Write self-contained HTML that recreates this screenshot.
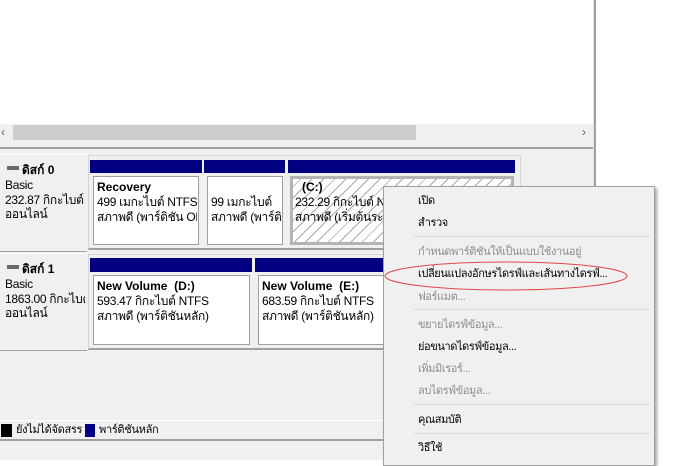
<!DOCTYPE html>
<html><head><meta charset="utf-8"><style>
*{margin:0;padding:0;box-sizing:border-box}
body{width:700px;height:460px;position:relative;overflow:hidden;background:#fff;font-family:"Liberation Sans","DejaVu Sans",sans-serif;font-size:12px;color:#000}
.a{position:absolute}
.t{position:absolute;white-space:nowrap;line-height:14px;letter-spacing:-0.3px}
.b{font-weight:bold;letter-spacing:0}
.bar{position:absolute;background:#000080}
.body{position:absolute;background:#fff;border:1px solid #a0a0a0;overflow:hidden}
.mi{position:absolute;left:34px;white-space:nowrap;line-height:14px;font-size:11px;letter-spacing:-0.4px}
.g{color:#8d8d8d}
.sep{position:absolute;left:30px;right:4px;height:1px;background:#d7d7d7}
</style></head><body>
<div class="a" style="left:0;top:0;width:593px;height:124px;background:#fff"></div>
<div class="a" style="left:593px;top:0;width:3px;height:460px;background:#a0a0a0;border-left:1px solid #e3e3e3"></div>
<div class="a" style="left:0;top:124px;width:593px;height:17px;background:#f0f0f0"></div>
<div class="a" style="left:13px;top:125px;width:403px;height:15px;background:#cdcdcd"></div>
<div class="t" style="left:1px;top:125px;color:#606060">‹</div>
<div class="t" style="left:582px;top:125px;color:#606060">›</div>
<div class="a" style="left:0;top:141px;width:593px;height:319px;background:#f0f0f0"></div>
<div class="a" style="left:0;top:147px;width:593px;height:2px;background:#a0a0a0"></div>
<div class="a" style="left:0;top:154px;width:87px;height:98px;background:#f0f0f0;border-top:1px solid #fff;border-bottom:1px solid #a0a0a0"></div>
<div class="a" style="left:7px;top:166px;width:12px;height:4px;background:#6a6a6a"></div>
<div class="t b" style="left:22px;top:163px">ดิสก์ 0</div>
<div class="t" style="left:5px;top:178px">Basic</div>
<div class="t" style="left:5px;top:193px;width:80px;overflow:hidden">232.87 กิกะไบต์</div>
<div class="t" style="left:5px;top:207px">ออนไลน์</div>
<div class="a" style="left:88px;top:155px;width:433px;height:95px;border:1px solid #d6d6d6;border-bottom:2px solid #a0a0a0"></div>
<div class="bar" style="left:90px;top:160px;width:112px;height:13px"></div>
<div class="bar" style="left:204px;top:160px;width:81px;height:13px"></div>
<div class="bar" style="left:288px;top:160px;width:227px;height:13px"></div>
<div class="body" style="left:93px;top:176px;width:106px;height:69px"></div>
<div class="body" style="left:207px;top:176px;width:76px;height:69px"></div>
<div class="body" style="left:290px;top:176px;width:224px;height:69px;border:3px solid #b4b4b4;background:repeating-linear-gradient(135deg,#fff 0 5px,#a8a8a8 5px 6px,#fff 6px 8px)"></div>
<div class="t b" style="left:97px;top:180px">Recovery</div>
<div class="t" style="left:97px;top:195px">499 เมกะไบต์ NTFS</div>
<div class="t" style="left:97px;top:210px;width:100px;overflow:hidden">สภาพดี (พาร์ติชัน OEM</div>
<div class="t" style="left:211px;top:195px">99 เมกะไบต์</div>
<div class="t" style="left:211px;top:210px;width:70px;overflow:hidden">สภาพดี (พาร์ติชัน</div>
<div class="t b" style="left:302px;top:180px">(C:)</div>
<div class="t" style="left:295px;top:195px">232.29 กิกะไบต์ NTFS</div>
<div class="t" style="left:295px;top:210px">สภาพดี (เริ่มต้นระบบ</div>
<div class="a" style="left:0;top:253px;width:87px;height:98px;background:#f0f0f0;border-top:1px solid #fff;border-bottom:1px solid #a0a0a0"></div>
<div class="a" style="left:7px;top:265px;width:12px;height:4px;background:#6a6a6a"></div>
<div class="t b" style="left:22px;top:262px">ดิสก์ 1</div>
<div class="t" style="left:5px;top:277px">Basic</div>
<div class="t" style="left:5px;top:292px;width:80px;overflow:hidden">1863.00 กิกะไบต์</div>
<div class="t" style="left:5px;top:306px">ออนไลน์</div>
<div class="a" style="left:88px;top:254px;width:433px;height:96px;border:1px solid #d6d6d6;border-bottom:2px solid #a0a0a0"></div>
<div class="bar" style="left:90px;top:258px;width:162px;height:14px"></div>
<div class="bar" style="left:255px;top:258px;width:260px;height:14px"></div>
<div class="body" style="left:93px;top:275px;width:157px;height:70px"></div>
<div class="body" style="left:258px;top:275px;width:256px;height:70px"></div>
<div class="t b" style="left:97px;top:279px">New Volume&nbsp; (D:)</div>
<div class="t" style="left:97px;top:294px">593.47 กิกะไบต์ NTFS</div>
<div class="t" style="left:97px;top:309px">สภาพดี (พาร์ติชันหลัก)</div>
<div class="t b" style="left:262px;top:279px">New Volume&nbsp; (E:)</div>
<div class="t" style="left:262px;top:294px">683.59 กิกะไบต์ NTFS</div>
<div class="t" style="left:262px;top:309px">สภาพดี (พาร์ติชันหลัก)</div>
<div class="a" style="left:0;top:420px;width:593px;height:1px;background:#fff"></div>
<div class="a" style="left:0;top:439px;width:593px;height:2px;background:#a0a0a0"></div>
<div class="a" style="left:1px;top:424px;width:11px;height:13px;background:#000"></div>
<div class="t" style="left:16px;top:423px;font-size:11px">ยังไม่ได้จัดสรร</div>
<div class="a" style="left:85px;top:424px;width:10px;height:13px;background:#000080"></div>
<div class="t" style="left:99px;top:423px;font-size:11px">พาร์ติชันหลัก</div>
<div class="a" style="left:383px;top:186px;width:272px;height:280px;background:#f0f0f0;border:1px solid #a0a0a0;box-shadow:2px 2px 3px rgba(0,0,0,.35)">
<div class="mi" style="top:7px">เปิด</div>
<div class="mi" style="top:29px">สำรวจ</div>
<div class="sep" style="top:49px"></div>
<div class="mi g" style="top:58px">กำหนดพาร์ติชันให้เป็นแบบใช้งานอยู่</div>
<div class="mi" style="top:80px">เปลี่ยนแปลงอักษรไดรฟ์และเส้นทางไดรฟ์...</div>
<div class="mi g" style="top:103px">ฟอร์แมต...</div>
<div class="sep" style="top:122px"></div>
<div class="mi g" style="top:131px">ขยายไดรฟ์ข้อมูล...</div>
<div class="mi" style="top:153px">ย่อขนาดไดรฟ์ข้อมูล...</div>
<div class="mi g" style="top:175px">เพิ่มมิเรอร์...</div>
<div class="mi g" style="top:197px">ลบไดรฟ์ข้อมูล...</div>
<div class="sep" style="top:217px"></div>
<div class="mi" style="top:226px">คุณสมบัติ</div>
<div class="sep" style="top:246px"></div>
<div class="mi" style="top:254px">วิธีใช้</div>
</div>
<svg class="a" style="left:0;top:0" width="700" height="460"><ellipse cx="506" cy="276" rx="121" ry="14" fill="none" stroke="#e0474c" stroke-width="1"/></svg>
</body></html>
